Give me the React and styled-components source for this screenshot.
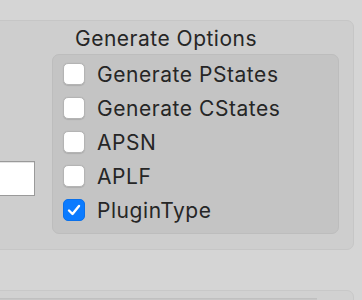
import React from "react";
import styled, { createGlobalStyle } from "styled-components";

const Global = createGlobalStyle`
  html, body { margin: 0; padding: 0; }
  body {
    background: #d5d5d5;
    font-family: "Inter", "Liberation Sans", sans-serif;
    color: #262626;
  }
`;

const Page = styled.div`
  display: flex;
  flex-direction: column;
  padding-top: 20px;
  height: 300px;
  box-sizing: border-box;
  overflow: hidden;
`;

const Panel = styled.section`
  margin-left: -10px;
  width: 364px;
  height: 230px;
  flex: none;
  box-sizing: border-box;
  background: #cecece;
  border: 1px solid #c6c6c6;
  border-radius: 7px;
  display: flex;
  align-items: flex-start;
`;

const LeftCol = styled.div`
  width: 45px;
  padding-top: 140px;
  display: flex;
`;

const TextField = styled.div`
  width: 44px;
  height: 35px;
  box-sizing: border-box;
  background: #ffffff;
  border: 1px solid #9a9a9a;
  box-shadow: inset 0 1px 0 #e4e4e4;
`;

const GroupCol = styled.div`
  margin-left: 16px;
  display: flex;
  flex-direction: column;
`;

const GroupTitle = styled.div`
  font-size: 21px;
  line-height: 24px;
  padding-left: 23px;
  height: 33px;
  padding-top: 6px;
  box-sizing: border-box;
  letter-spacing: 0.5px;
`;

const GroupBox = styled.div`
  width: 287px;
  height: 180px;
  box-sizing: border-box;
  background: #c4c4c4;
  border: 1px solid #bdbdbd;
  border-radius: 7px;
  padding: 8px 0 0 10px;
  display: flex;
  flex-direction: column;
  gap: 12px;
`;

const Row = styled.label`
  display: flex;
  align-items: center;
  gap: 12px;
  height: 22px;
  font-size: 21px;
  letter-spacing: 0.55px;
`;

const Box = styled.span`
  width: 22px;
  height: 22px;
  box-sizing: border-box;
  border-radius: 5px;
  flex: none;
  display: flex;
  align-items: center;
  justify-content: center;
  background: ${(p) => (p.$checked ? "#0b7bff" : "#ffffff")};
  border: 1px solid ${(p) => (p.$checked ? "#0a70ea" : "#b4b4b4")};
  box-shadow: ${(p) => (p.$checked ? "none" : "0 0.5px 1px rgba(0,0,0,0.12)")};
`;

const Bottom = styled.section`
  margin-top: 40px;
  margin-left: -10px;
  width: 364px;
  height: 60px;
  flex: none;
  box-sizing: border-box;
  background: #d1d1d1;
  border: 1px solid #c8c8c8;
  border-radius: 7px;
  padding-top: 7px;
`;

const BottomInner = styled.div`
  width: 326px;
  height: 40px;
  background: #c6c6c6;
  border-top: 1px solid #c0c0c0;
`;

const items = [
  ["Generate PStates", false],
  ["Generate CStates", false],
  ["APSN", false],
  ["APLF", false],
  ["PluginType", true],
];

function Check() {
  return (
    <svg width="14" height="12" viewBox="0 0 14 12">
      <path d="M2 6.5 L5.5 10 L12 2" fill="none" stroke="#fff" strokeWidth="2.4" strokeLinecap="round" strokeLinejoin="round" />
    </svg>
  );
}

export default function App() {
  return (
    <>
      <Global />
      <Page>
        <Panel>
          <LeftCol>
            <TextField />
          </LeftCol>
          <GroupCol>
            <GroupTitle>Generate Options</GroupTitle>
            <GroupBox>
              {items.map(([label, checked]) => (
                <Row key={label}>
                  <Box $checked={checked}>{checked && <Check />}</Box>
                  {label}
                </Row>
              ))}
            </GroupBox>
          </GroupCol>
        </Panel>
        <Bottom>
          <BottomInner />
        </Bottom>
      </Page>
    </>
  );
}
